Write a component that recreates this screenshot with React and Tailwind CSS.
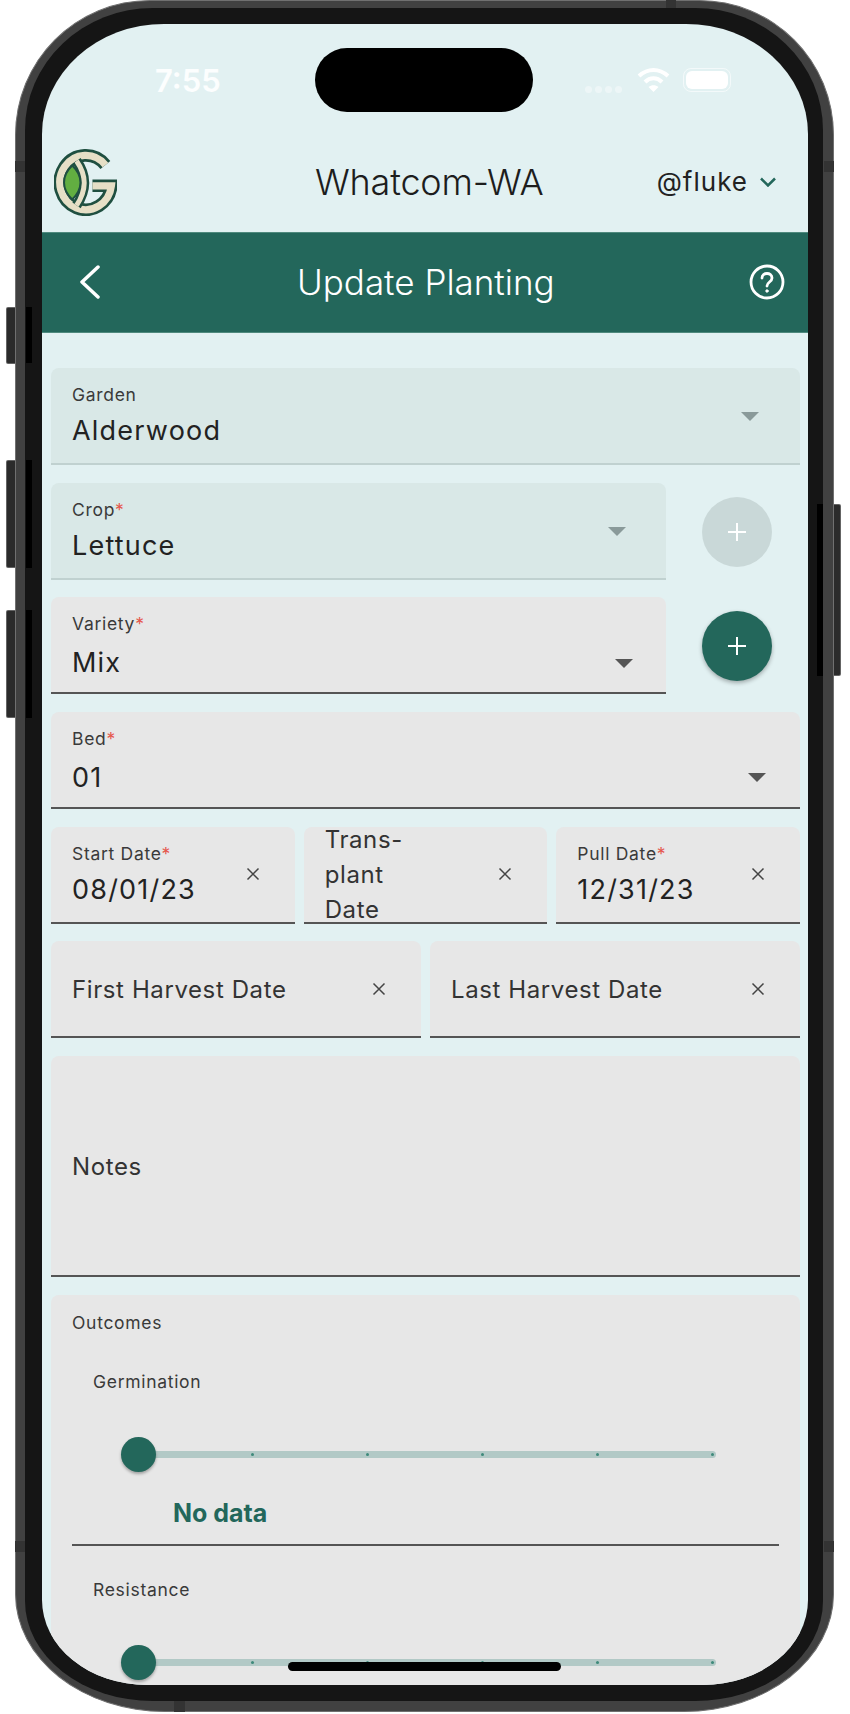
const FONT = 'font-["Inter","Roboto",sans-serif]'

function Caret({ className }) {
  return (
    <svg className={className} width="18" height="9" viewBox="0 0 18 9">
      <path d="M0 0H18L9 9Z" fill="currentColor" />
    </svg>
  )
}

function CloseX() {
  return (
    <svg className="shrink-0 text-[#444]" width="14" height="14" viewBox="0 0 14 14" fill="none" stroke="currentColor" strokeWidth="1.500">
      <path d="M1.500 1.500L12.500 12.500M12.500 1.500L1.500 12.500" />
    </svg>
  )
}

function Plus() {
  return (
    <svg width="18" height="18" viewBox="0 0 18 18" stroke="white" strokeWidth="2">
      <path d="M0 9H18M9 0V18" />
    </svg>
  )
}

const G_PATH = 'M197 102A78 82 0 1 0 215 165H158'
const CRESCENT = 'M110 90Q156 155 110 224'

function Logo() {
  return (
    <svg width="63" height="67" viewBox="42 55 190 200" fill="none" className="shrink-0">
      <path d={G_PATH} stroke="#1f4f40" strokeWidth="38" />
      <path d={G_PATH} stroke="#e6dfc6" strokeWidth="22" />
      <path d={CRESCENT} stroke="#1f4f40" strokeWidth="30" />
      <path d={CRESCENT} stroke="#e6dfc6" strokeWidth="15" />
      <path d="M97 104C64 135 64 175 97 206C130 175 130 135 97 104Z" fill="#62ae41" stroke="#1f4f40" strokeWidth="6" />
    </svg>
  )
}

function Field({ label, value, required, disabled, caret, className = '' }) {
  return (
    <div className={`h-[97px] rounded-t-[8px] px-[21px] pt-[16px] flex justify-between border-b-2 ${disabled ? 'bg-[#d9e8e7] border-[#c0d1d0]' : 'bg-[#e7e7e7] border-[#555]'} ${className}`}>
      <div>
        <div className="text-[17.5px] leading-[22px] tracking-[0.7px] text-[#3a3a3a]">
          {label}
          {required && <span className="text-[#e5584e]">*</span>}
        </div>
        <div className={`${disabled ? 'mt-[7px]' : 'mt-[10px]'} text-[27px] leading-[36px] tracking-[1.2px] text-[#222]`}>{value}</div>
      </div>
      {caret}
    </div>
  )
}

function DateField({ label, value, required, className = '' }) {
  return (
    <div className={`h-[97px] rounded-t-[8px] pl-[21px] pr-[35px] bg-[#e7e7e7] border-b-2 border-[#555] flex items-center justify-between ${className}`}>
      <div className="min-w-0">
        {value ? (
          <>
            <div className="mt-[3px] text-[17.5px] leading-[22px] tracking-[0.7px] text-[#3a3a3a]">
              {label}
              {required && <span className="text-[#e5584e]">*</span>}
            </div>
            <div className="mt-[7px] text-[27px] leading-[36px] tracking-[1.2px] text-[#222]">{value}</div>
          </>
        ) : (
          <div className="mt-[2px] text-[24px] leading-[35px] tracking-[0.6px] text-[#333]">{label}</div>
        )}
      </div>
      <CloseX />
    </div>
  )
}

function Slider({ label, showValue }) {
  return (
    <div>
      <div className="pl-[21px] text-[17.5px] leading-[22px] tracking-[0.7px] text-[#3a3a3a]">{label}</div>
      <div className="relative ml-[65px] mt-[58px] mr-[63px] h-[7px] rounded-full bg-[#b2c9c6] flex items-center justify-between pl-[114px] pr-[2px]">
        <div className="absolute left-[-16px] top-[-14px] w-[35px] h-[35px] rounded-full bg-[#23675b] shadow-[0_2px_3px_rgba(0,0,0,0.3)]" />
        {[0, 1, 2, 3, 4].map((i) => (
          <div key={i} className="w-[3px] h-[3px] rounded-full bg-[#3f8a7b]" />
        ))}
      </div>
      {showValue && (
        <>
          <div className="pl-[101px] mt-[38px] text-[25px] leading-[34px] font-bold text-[#23675b]">No data</div>
          <div className="mt-[14px] h-[2px] bg-[#555]" />
        </>
      )}
    </div>
  )
}

export default function App() {
  return (
    <div className={`w-[850px] h-[1714px] bg-white overflow-hidden relative ${FONT}`}>
      {/* side buttons */}
      <div className="absolute left-[6px] top-[307px] w-[10px] h-[57px] rounded-l-[2px] bg-[#2b2b2b] border border-[#8a8a8a]/60" />
      <div className="absolute left-[6px] top-[460px] w-[10px] h-[108px] rounded-l-[2px] bg-[#2b2b2b] border border-[#8a8a8a]/60" />
      <div className="absolute left-[6px] top-[610px] w-[10px] h-[108px] rounded-l-[2px] bg-[#2b2b2b] border border-[#8a8a8a]/60" />
      <div className="absolute left-[832px] top-[504px] w-[9px] h-[172px] rounded-r-[2px] bg-[#2b2b2b] border border-[#8a8a8a]/60" />

      {/* phone frame */}
      <div className="relative ml-[15px] w-[819px] h-[1712px] rounded-[135px_135px_150px_150px/135px_135px_118px_118px] bg-[#414141] border border-[#707070] pt-[7px] pl-[9px] pr-[10px] pb-[10px]">
        <div className="h-full rounded-[128px_128px_128px_128px/122px_122px_100px_100px] bg-[#151515] pt-[16px] pl-[17px] pr-[15px] pb-[16px]">
          <div className="relative h-full rounded-[122px_122px_105px_105px/110px_110px_85px_85px] overflow-hidden bg-[#e2f1f2]">
            {/* status bar */}
            <div className="relative h-[108px]">
              <div className="absolute left-[113px] top-[39px] text-[31px] leading-[36px] font-semibold text-white/90">7:55</div>
              <div className="absolute left-[273px] top-[24px] w-[218px] h-[64px] rounded-full bg-black" />
              <div className="absolute left-[543px] top-[62px] flex gap-[3px]">
                {[0, 1, 2, 3].map((i) => (
                  <div key={i} className="w-[7px] h-[7px] rounded-full bg-white/40" />
                ))}
              </div>
              <svg className="absolute left-[595px] top-[43px]" width="33" height="25" viewBox="0 0 33 25" fill="none" stroke="white" strokeWidth="4">
                <path d="M2 9C11 1 22 1 31 9" />
                <path d="M8 15C13 10 20 10 25 15" />
                <path d="M16.500 25L11.500 20C14.500 17.500 18.500 17.500 21.500 20Z" fill="white" stroke="none" />
              </svg>
              <div className="absolute left-[641px] top-[44px] w-[48px] h-[24px] rounded-[8px] border border-white/60 p-[2px]">
                <div className="h-full rounded-[6px] bg-white" />
              </div>
            </div>

            {/* top header */}
            <div className="h-[100px] pl-[12px] pr-[32px] flex items-center">
              <Logo />
              <div className="ml-[198px] text-[36px] leading-[44px] font-light text-[#1d1d1d] tracking-[-0.2px]">Whatcom-WA</div>
              <div className="ml-auto flex items-center gap-[12px]">
                <span className="text-[26px] leading-[34px] tracking-[1px] text-[#222]">@fluke</span>
                <svg width="16" height="10" viewBox="0 0 16 10" fill="none" stroke="#23675b" strokeWidth="2.500">
                  <path d="M1 1.500L8 8.500L15 1.500" />
                </svg>
              </div>
            </div>

            {/* title bar */}
            <div className="h-[101px] bg-[#23675b] border-y border-[#4f8a7e] pl-[37px] pr-[23px] flex items-center">
              <svg className="mt-[-2px]" width="22" height="34" viewBox="0 0 22 34" fill="none" stroke="white" strokeWidth="3.500" strokeLinecap="round" strokeLinejoin="round">
                <path d="M19 2L3 17L19 32" />
              </svg>
              <div className="ml-[196px] mt-[-2px] text-[35px] leading-[44px] font-light text-white">Update Planting</div>
              <svg className="ml-auto mt-[-2px]" width="36" height="36" viewBox="0 0 36 36" fill="none" stroke="white" strokeWidth="2.800" strokeLinecap="round">
                <circle cx="18" cy="18" r="16" />
                <path d="M13 14C13 8 23 8 23 14C23 18 18 18 18 22" />
                <circle cx="18" cy="27" r="1.200" fill="white" strokeWidth="1" />
              </svg>
            </div>

            {/* form */}
            <div className="pt-[35px] pl-[9px] pr-[8px] flex flex-col gap-[17.7px]">
              <Field label="Garden" value="Alderwood" disabled caret={<Caret className="mt-[28px] mr-[20px] text-[#8a9a9a]" />} />
              <div className="flex gap-[36px]">
                <Field className="w-[615px]" label="Crop" value="Lettuce" required disabled caret={<Caret className="mt-[28px] mr-[19px] text-[#8a9a9a]" />} />
                <div className="pt-[14px]">
                  <div className="w-[70px] h-[70px] rounded-full bg-[#c9d8d8] flex items-center justify-center"><Plus /></div>
                </div>
              </div>
              <div className="flex gap-[36px]">
                <Field className="w-[615px]" label="Variety" value="Mix" required caret={<Caret className="mt-[46px] mr-[12px] text-[#555]" />} />
                <div className="pt-[14px]">
                  <div className="w-[70px] h-[70px] rounded-full bg-[#23675b] shadow-[0_2px_4px_rgba(0,0,0,0.3)] flex items-center justify-center"><Plus /></div>
                </div>
              </div>
              <Field label="Bed" value="01" required caret={<Caret className="mt-[45px] mr-[13px] text-[#555]" />} />
              <div className="flex gap-[9px]">
                <DateField className="flex-1" label="Start Date" value="08/01/23" required />
                <div className="flex-1 h-[97px] rounded-t-[8px] pl-[21px] pr-[35px] bg-[#e7e7e7] border-b-2 border-[#555] flex items-center justify-between">
                  <div className="w-[100px] text-[24px] leading-[35px] tracking-[0.6px] text-[#333]">Trans-<br />plant<br />Date</div>
                  <CloseX />
                </div>
                <DateField className="flex-1" label="Pull Date" value="12/31/23" required />
              </div>
              <div className="flex gap-[9px]">
                <DateField className="flex-1" label="First Harvest Date" />
                <DateField className="flex-1" label="Last Harvest Date" />
              </div>
              <div className="h-[221px] rounded-t-[8px] bg-[#e7e7e7] border-b-2 border-[#555] px-[21px] flex items-center">
                <span className="mt-[2px] text-[24px] leading-[35px] tracking-[0.6px] text-[#333]">Notes</span>
              </div>
              <div className="rounded-t-[8px] bg-[#e7e7e7] px-[21px] pt-[17px] pb-[40px]">
                <div className="text-[17.5px] leading-[22px] tracking-[0.7px] text-[#3a3a3a]">Outcomes</div>
                <div className="mt-[37px]">
                  <Slider label="Germination" showValue />
                </div>
                <div className="mt-[33px]">
                  <Slider label="Resistance" />
                </div>
              </div>
            </div>

            {/* home indicator */}
            <div className="absolute left-[246px] top-[1638px] w-[273px] h-[9px] rounded-full bg-black" />
          </div>

          {/* shadows of the buttons inside the bezel */}
          <div className="absolute left-[10px] top-[306px] w-[6px] h-[56px] bg-black" />
          <div className="absolute left-[10px] top-[459px] w-[6px] h-[108px] bg-black" />
          <div className="absolute left-[10px] top-[609px] w-[6px] h-[108px] bg-black" />
          <div className="absolute left-[801px] top-[503px] w-[6px] h-[172px] bg-black" />

          {/* antenna bands */}
          <div className="absolute left-[-1px] top-[160px] w-[10px] h-[11px] bg-[#333]" />
          <div className="absolute left-[808px] top-[160px] w-[10px] h-[11px] bg-[#333]" />
          <div className="absolute left-[-1px] top-[1540px] w-[10px] h-[11px] bg-[#333]" />
          <div className="absolute left-[808px] top-[1540px] w-[10px] h-[11px] bg-[#333]" />
          <div className="absolute left-[650px] top-[-1px] w-[10px] h-[8px] bg-[#333]" />
          <div className="absolute left-[158px] top-[1700px] w-[11px] h-[11px] bg-[#333]" />
        </div>
      </div>
    </div>
  )
}
